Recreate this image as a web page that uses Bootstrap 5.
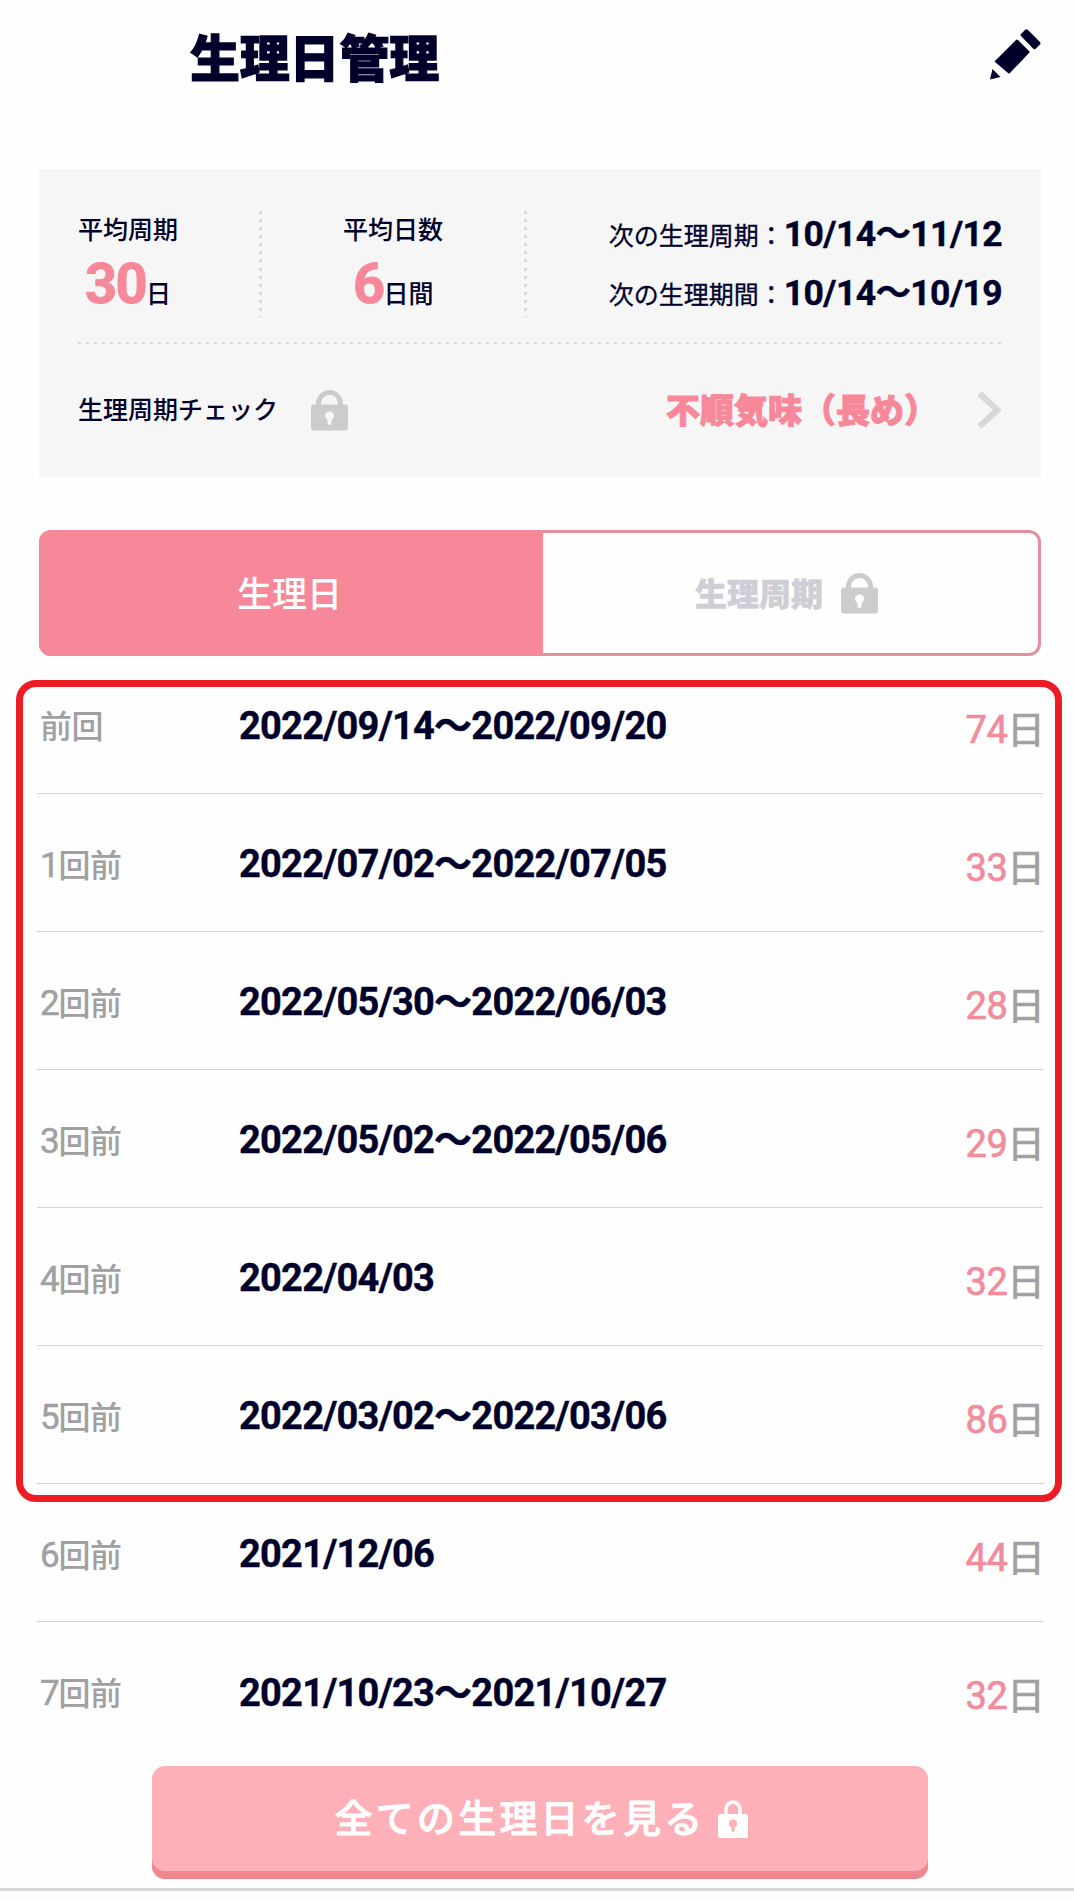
<!DOCTYPE html>
<html lang="ja">
<head>
<meta charset="utf-8">
<meta name="viewport" content="width=device-width, initial-scale=1">
<title>生理日管理</title>
<link href="https://cdn.jsdelivr.net/npm/bootstrap@5.3.0/dist/css/bootstrap.min.css" rel="stylesheet">
<style>
body{font-family:Roboto,"Noto Sans CJK JP",sans-serif;background:#fefefe;color:#00002b;line-height:1;overflow-x:hidden}
.screen{width:1074px;height:1901px;overflow:hidden}
.topbar{height:169px;padding:29px 33px 0 190px}
.page-title{font-size:50px;font-weight:900;line-height:56px;margin:3px 0 0;-webkit-text-stroke:1.2px #00002b;letter-spacing:-.2px}
.summary{margin:0 33px 0 39px;height:308px;background:#f6f6f6;padding:42px 39px 0 39px}
.stats{height:106px}
.cap-txt{font-size:25px;line-height:30px;font-weight:500;white-space:nowrap}
.vdots{width:3px;height:106px;background:repeating-linear-gradient(#d6d6dc 0 3px,transparent 3px 8.08px)}
.hdots{height:2px;margin-top:25px;background:repeating-linear-gradient(90deg,#d9d9de 0 3px,transparent 3px 8px)}
.stat-a{width:181px;padding-top:5px}
.stat-b{width:262px;padding:5px 0 0 81px}
.pink{color:#f6889a}
.big{font-size:56px;font-weight:700;line-height:50px;letter-spacing:-1.6px;-webkit-text-stroke:1px #f6889a}
.stat-val{height:50px;margin-top:13px}
.stat-b .stat-val{padding-left:10px}
.stat-a .stat-val{padding-left:7px}
.next-row{height:59px;font-size:25px;white-space:nowrap;padding-top:3px;-webkit-text-stroke:.3px #00002b}
.next-row span{position:relative;top:-1px}
.next-row b{font-size:35.5px;font-weight:700;letter-spacing:-.6px;line-height:40px;-webkit-text-stroke:.4px #00002b}
.check{height:132px}
.check .cap-txt{width:233px;padding-top:2px}
.verdict{font-size:34px;font-weight:900;-webkit-text-stroke:1px #f6889a;white-space:nowrap;margin-right:39px;padding-top:2px}
.tabs{margin:53px 33px 0 39px;height:126px;border:3px solid #e2909f;border-radius:12px}
.tab-on{width:504px;margin:-3px 0 -3px -3px;background:#f6889a;border-radius:12px 0 0 12px;color:#fff;font-size:35px;font-weight:500;padding:4px 3px 0 0}
.tab-on,.tab-off{flex:none}
.tabs .tab-off{width:495px;color:#cfced6;font-size:32px;font-weight:900;-webkit-text-stroke:.6px #cfced6;padding-right:8px}
.tab-off span{padding-top:4px}
.tab-off svg{margin-left:18px}
.history{margin:0 31px 0 37px}
.entry{height:138px;border-bottom:1.5px solid #d3d3d6;padding:0 3px}
.ago{width:199px;color:#a0a0a2;font-size:32px;font-weight:500;padding-top:5px;letter-spacing:-.4px}
.ago i{font-style:normal;font-weight:400;font-size:35px;letter-spacing:-1.2px;-webkit-text-stroke:.5px}
.span-txt{font-size:38px;font-weight:700;white-space:nowrap;letter-spacing:-.75px;padding-top:3px;-webkit-text-stroke:.4px #00002b}
.gap-days{font-size:38px;color:#f08c9c;white-space:nowrap;padding-top:10px;margin-right:-5px;letter-spacing:-.4px;-webkit-text-stroke:.7px}
.gap-days span{color:#a0a0a2;margin-left:-.5px;letter-spacing:0}
.frame{left:-21px;top:24px;width:1046px;height:822px;border:7px solid #ed1c24;border-radius:20px;pointer-events:none}
.all-btn{margin:6px 0 0 152px;width:776px;height:113px;border:0;border-radius:13px;background:#fdb0b7;box-shadow:inset 0 -8px #f0878f;color:#fff;font-size:38px;font-weight:500;letter-spacing:3.2px;padding:0 0 7px 3px;-webkit-text-stroke:.8px #fff}
.all-btn svg{margin-left:13px}
.bottom-line{height:3px;background:#d9d9d9;margin-top:9px}
svg{display:block;flex:none}
</style>
</head>
<body>
<main class="screen">
  <header class="topbar d-flex justify-content-between align-items-start">
    <h1 class="page-title">生理日管理</h1>
    <svg width="51" height="51" viewBox="0 0 51 51" fill="#00002b"><path d="M5 32 26 11Q27 10 28 11L39 22Q40 23 39 24L20 44Q19 45 18 44L5 33Q4 32.500 5 32ZM31 5 35 1Q36.500-.5 38 1L50 13Q51 14.500 50 15.500L46 19.500Q44.500 21 43 19.500L31 7Q30 6 31 5ZM2.500 40 10.500 48 0 50.500Z"/></svg>
  </header>

  <section class="summary">
    <div class="stats d-flex">
      <div class="stat-a">
        <div class="cap-txt">平均周期</div>
        <div class="stat-val d-flex align-items-baseline"><span class="big pink">30</span><span class="cap-txt">日</span></div>
      </div>
      <div class="vdots"></div>
      <div class="stat-b">
        <div class="cap-txt">平均日数</div>
        <div class="stat-val d-flex align-items-baseline"><span class="big pink">6</span><span class="cap-txt">日間</span></div>
      </div>
      <div class="vdots"></div>
      <div class="ms-auto">
        <div class="next-row d-flex align-items-baseline"><span>次の生理周期：</span><b>10/14～11/12</b></div>
        <div class="next-row d-flex align-items-baseline"><span>次の生理期間：</span><b>10/14～10/19</b></div>
      </div>
    </div>
    <div class="hdots"></div>
    <div class="check d-flex align-items-center">
      <span class="cap-txt">生理周期チェック</span>
      <svg width="37" height="42" viewBox="0 0 37 42"><path d="M7.500 17V14.500a11 11 0 0 1 22 0V17" fill="none" stroke="#ccc" stroke-width="5"/><rect y="15.500" width="37" height="26" rx="3" fill="#ccc"/><path d="M18.500 22.500a4.300 4.300 0 0 1 2.300 8l-.5 4q-.3 1.500-1.800 1.500t-1.800-1.500l-.5-4a4.300 4.300 0 0 1 2.300-8" fill="#f6f6f6"/></svg>
      <span class="verdict pink ms-auto">不順気味（長め）</span>
      <svg width="25" height="38" viewBox="0 0 25 38"><path d="M2.500 2.500 20.500 19 2.500 35.500" fill="none" stroke="#d8d8d8" stroke-width="6"/></svg>
    </div>
  </section>

  <nav class="tabs d-flex">
    <div class="tab-on d-flex align-items-center justify-content-center">生理日</div>
    <div class="tab-off d-flex align-items-center justify-content-center"><span>生理周期</span>
      <svg width="37" height="42" viewBox="0 0 37 42"><path d="M7.500 17V14.500a11 11 0 0 1 22 0V17" fill="none" stroke="#ccc" stroke-width="5"/><rect y="15.500" width="37" height="26" rx="3" fill="#ccc"/><path d="M18.500 22.500a4.300 4.300 0 0 1 2.300 8l-.5 4q-.3 1.500-1.800 1.500t-1.800-1.500l-.5-4a4.300 4.300 0 0 1 2.300-8" fill="#fff"/></svg>
    </div>
  </nav>

  <section class="history position-relative">
    <div class="entry d-flex align-items-center"><span class="ago">前回</span><span class="span-txt">2022/09/14～2022/09/20</span><span class="gap-days ms-auto">74<span>日</span></span></div>
    <div class="entry d-flex align-items-center"><span class="ago"><i>1</i>回前</span><span class="span-txt">2022/07/02～2022/07/05</span><span class="gap-days ms-auto">33<span>日</span></span></div>
    <div class="entry d-flex align-items-center"><span class="ago"><i>2</i>回前</span><span class="span-txt">2022/05/30～2022/06/03</span><span class="gap-days ms-auto">28<span>日</span></span></div>
    <div class="entry d-flex align-items-center"><span class="ago"><i>3</i>回前</span><span class="span-txt">2022/05/02～2022/05/06</span><span class="gap-days ms-auto">29<span>日</span></span></div>
    <div class="entry d-flex align-items-center"><span class="ago"><i>4</i>回前</span><span class="span-txt">2022/04/03</span><span class="gap-days ms-auto">32<span>日</span></span></div>
    <div class="entry d-flex align-items-center"><span class="ago"><i>5</i>回前</span><span class="span-txt">2022/03/02～2022/03/06</span><span class="gap-days ms-auto">86<span>日</span></span></div>
    <div class="entry d-flex align-items-center"><span class="ago"><i>6</i>回前</span><span class="span-txt">2021/12/06</span><span class="gap-days ms-auto">44<span>日</span></span></div>
    <div class="entry d-flex align-items-center border-0"><span class="ago"><i>7</i>回前</span><span class="span-txt">2021/10/23～2021/10/27</span><span class="gap-days ms-auto">32<span>日</span></span></div>
    <div class="frame position-absolute"></div>
  </section>

  <button class="all-btn d-flex align-items-center justify-content-center" type="button">全ての生理日を見る
    <svg width="30" height="38" viewBox="0 0 30 38"><path d="M8 16V9.500a7 7.500 0 0 1 14 0V16" fill="none" stroke="#fff" stroke-width="3.500"/><rect y="14" width="30" height="24" rx="2.500" fill="#fff"/><path d="M15 19.500a4 4 0 0 1 2 7.500l-.6 3.500q-.3 1.500-1.400 1.500t-1.400-1.500L13 27a4 4 0 0 1 2-7.500" fill="#fdb0b7"/></svg>
  </button>
  <div class="bottom-line"></div>
</main>
<script src="https://cdn.jsdelivr.net/npm/bootstrap@5.3.0/dist/js/bootstrap.bundle.min.js"></script>
</body>
</html>
